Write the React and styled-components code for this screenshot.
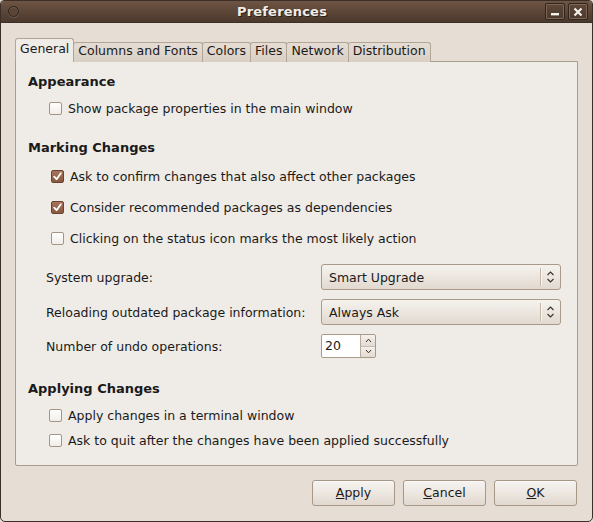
import React from 'react';
import styled, { createGlobalStyle } from 'styled-components';

const Global = createGlobalStyle`
  html, body { margin: 0; padding: 0; background: #e6ded5; }
  body { font-family: "DejaVu Sans", "Liberation Sans", sans-serif; font-size: 12.5px; color: #1a1a1a; }
`;

const Window = styled.div`
  width: 593px;
  height: 522px;
  box-sizing: border-box;
  border: 1px solid #3b2f27;
  border-radius: 4px 4px 5px 5px;
  background: #e6ded5;
  display: flex;
  flex-direction: column;
  overflow: hidden;
`;

const TitleBar = styled.div`
  height: 21px;
  flex: none;
  display: flex;
  align-items: center;
  padding: 0 4px 0 7px;
  background: linear-gradient(#6e5444, #5a4536 55%, #4b392d);
  border-bottom: 1px solid #3b2f27;
`;

const MenuCircle = styled.span`
  width: 9px;
  height: 9px;
  border-radius: 50%;
  border: 1px solid #2e241d;
  box-shadow: inset 0 1px 0 rgba(255,255,255,0.15), 0 1px 0 rgba(255,255,255,0.12);
  background: #5a4536;
`;

const Title = styled.div`
  flex: 1;
  text-align: center;
  font-weight: bold;
  font-size: 13px;
  color: #f2ede7;
  text-shadow: 1px 1px 0 #2a1f18;
  letter-spacing: 0.2px;
`;

const WinButtons = styled.div`
  display: flex;
  gap: 3px;
`;

const WinButton = styled.span`
  width: 20px;
  height: 17px;
  box-sizing: border-box;
  border: 1px solid #2f251e;
  border-radius: 2px;
  box-shadow: inset 0 0 0 1px #7d6656;
  background: linear-gradient(#5e4839, #4a392d);
  display: flex;
  align-items: center;
  justify-content: center;
`;

const Body = styled.div`
  flex: 1;
  display: flex;
  flex-direction: column;
  padding: 15px 14px 0 14px;
`;

const TabBar = styled.div`
  display: flex;
  align-items: flex-end;
  height: 24px;
  position: relative;
  z-index: 1;
  margin-bottom: -1px;
`;

const Tab = styled.div`
  box-sizing: border-box;
  height: ${p => (p.$active ? '24px' : '20px')};
  padding: ${p => (p.$active ? '2px 4px 0 4px' : '0 4px')};
  border: 1px solid #b3a595;
  border-bottom: none;
  border-radius: 3px 3px 0 0;
  margin-right: -1px;
  background: ${p => (p.$active ? '#efebe6' : 'linear-gradient(#e5ddd4, #d9cfc4)')};
  color: #1a1a1a;
  white-space: nowrap;
  line-height: 15px;
`;

const Panel = styled.div`
  height: 405px;
  box-sizing: border-box;
  border: 1px solid #ab9c8c;
  border-radius: 0 0 2px 2px;
  background: #efebe6;
  padding: 12px 12px 0 12px;
  display: flex;
  flex-direction: column;
`;

const Heading = styled.div`
  font-weight: bold;
  font-size: 13px;
  line-height: 16px;
  height: 16px;
  margin-top: ${p => p.$mt || 0}px;
`;

const CheckRow = styled.div`
  display: flex;
  align-items: center;
  box-sizing: border-box;
  height: 22px;
  padding-bottom: 2px;
  padding-left: ${p => p.$indent || 21}px;
  margin-top: ${p => p.$mt || 0}px;
`;

const Box = styled.span`
  width: 13px;
  height: 13px;
  box-sizing: border-box;
  flex: none;
  border-radius: 2px;
  border: 1px solid ${p => (p.$checked ? '#6b4330' : '#a59584')};
  background: ${p => (p.$checked ? 'linear-gradient(#a7735a, #8a5940)' : 'linear-gradient(#ffffff, #f1ede9)')};
  margin-right: 6px;
  display: flex;
  align-items: center;
  justify-content: center;
`;

const FieldRow = styled.div`
  display: flex;
  align-items: center;
  padding-left: 18px;
  margin-top: ${p => p.$mt || 0}px;
  height: ${p => p.$h || 26}px;
`;

const FieldLabel = styled.span`
  width: 275px;
  flex: none;
`;

const Combo = styled.div`
  width: 240px;
  height: 26px;
  box-sizing: border-box;
  border: 1px solid #a99a8a;
  border-radius: 3px;
  background: linear-gradient(#f5f2ee, #ece6df 50%, #e2d9cf);
  display: flex;
  align-items: center;
  padding-left: 7px;
`;

const ComboText = styled.span`
  flex: 1;
`;

const ComboSep = styled.span`
  width: 1px;
  height: 18px;
  background: #c2b6a8;
  box-shadow: 1px 0 0 #faf8f5;
`;

const ComboArrow = styled.span`
  width: 19px;
  display: flex;
  justify-content: center;
`;

const Spin = styled.div`
  display: flex;
  height: 24px;
  width: 55px;
  box-sizing: border-box;
  border: 1px solid #a89989;
  border-radius: 2px;
  overflow: hidden;
`;

const SpinEntry = styled.div`
  flex: 1;
  background: #ffffff;
  padding-left: 3px;
  line-height: 22px;
`;

const SpinButtons = styled.div`
  width: 14px;
  display: flex;
  flex-direction: column;
  border-left: 1px solid #b8ab9d;
`;

const SpinButton = styled.span`
  flex: 1;
  display: flex;
  align-items: center;
  justify-content: center;
  background: linear-gradient(#f4f0ec, #e3dbd2);
  & + & { border-top: 1px solid #c7bcb0; }
`;

const ButtonRow = styled.div`
  display: flex;
  justify-content: flex-end;
  gap: 8px;
  margin-top: 14px;
  padding-right: 1px;
`;

const Button = styled.div`
  width: 83px;
  height: 26px;
  box-sizing: border-box;
  border: 1px solid #a69787;
  border-radius: 3px;
  background: linear-gradient(#f6f3f0, #ede7e1 50%, #e1d8ce);
  display: flex;
  align-items: center;
  justify-content: center;
  padding-bottom: 1px;
  box-shadow: inset 0 1px 0 #fbfaf8;
`;

const Check = () => (
  <svg width="9" height="9" viewBox="0 0 9 9">
    <path d="M1.2 4.6 L3.6 7.2 L7.8 1.2" fill="none" stroke="#ffffff" strokeWidth="1.8" strokeLinecap="round" strokeLinejoin="round" />
  </svg>
);

const UpDown = () => (
  <svg width="9" height="14" viewBox="0 0 9 14">
    <path d="M1.5 5 L4.5 2 L7.5 5 M1.5 9 L4.5 12 L7.5 9" fill="none" stroke="#3a3129" strokeWidth="1.1" />
  </svg>
);

const SmallArrow = ({ down }) => (
  <svg width="7" height="5" viewBox="0 0 7 5">
    <path d={down ? 'M1 1 L3.5 3.8 L6 1' : 'M1 4 L3.5 1.2 L6 4'} fill="none" stroke="#3a3129" strokeWidth="1" />
  </svg>
);

const CheckItem = ({ checked, children, indent, mt }) => (
  <CheckRow $indent={indent} $mt={mt}>
    <Box $checked={checked}>{checked && <Check />}</Box>
    <span>{children}</span>
  </CheckRow>
);

const tabs = ['General', 'Columns and Fonts', 'Colors', 'Files', 'Network', 'Distribution'];

export default function App() {
  return (
    <>
      <Global />
      <Window>
        <TitleBar>
          <MenuCircle />
          <Title>Preferences</Title>
          <WinButtons>
            <WinButton>
              <svg width="10" height="10" viewBox="0 0 10 10">
                <rect x="1" y="6" width="8" height="2.4" fill="#f4f0ec" />
              </svg>
            </WinButton>
            <WinButton>
              <svg width="10" height="10" viewBox="0 0 10 10">
                <path d="M1.5 1.5 L8.5 8.5 M8.5 1.5 L1.5 8.5" stroke="#f4f0ec" strokeWidth="2.2" />
              </svg>
            </WinButton>
          </WinButtons>
        </TitleBar>
        <Body>
          <TabBar>
            {tabs.map((t, i) => (
              <Tab key={t} $active={i === 0}>{t}</Tab>
            ))}
          </TabBar>
          <Panel>
            <Heading>Appearance</Heading>
            <CheckItem mt={8}>Show package properties in the main window</CheckItem>

            <Heading $mt={20}>Marking Changes</Heading>
            <CheckItem checked indent={23} mt={10}>Ask to confirm changes that also affect other packages</CheckItem>
            <CheckItem checked indent={23} mt={9}>Consider recommended packages as dependencies</CheckItem>
            <CheckItem indent={23} mt={9}>Clicking on the status icon marks the most likely action</CheckItem>

            <FieldRow $mt={14}>
              <FieldLabel>System upgrade:</FieldLabel>
              <Combo>
                <ComboText>Smart Upgrade</ComboText>
                <ComboSep />
                <ComboArrow><UpDown /></ComboArrow>
              </Combo>
            </FieldRow>
            <FieldRow $mt={9}>
              <FieldLabel>Reloading outdated package information:</FieldLabel>
              <Combo>
                <ComboText>Always Ask</ComboText>
                <ComboSep />
                <ComboArrow><UpDown /></ComboArrow>
              </Combo>
            </FieldRow>
            <FieldRow $mt={9} $h={24}>
              <FieldLabel>Number of undo operations:</FieldLabel>
              <Spin>
                <SpinEntry>20</SpinEntry>
                <SpinButtons>
                  <SpinButton><SmallArrow /></SpinButton>
                  <SpinButton><SmallArrow down /></SpinButton>
                </SpinButtons>
              </Spin>
            </FieldRow>

            <Heading $mt={23}>Applying Changes</Heading>
            <CheckItem mt={8}>Apply changes in a terminal window</CheckItem>
            <CheckItem mt={3}>Ask to quit after the changes have been applied successfully</CheckItem>
          </Panel>
          <ButtonRow>
            <Button><span><u>A</u>pply</span></Button>
            <Button><span><u>C</u>ancel</span></Button>
            <Button><span><u>O</u>K</span></Button>
          </ButtonRow>
        </Body>
      </Window>
    </>
  );
}
